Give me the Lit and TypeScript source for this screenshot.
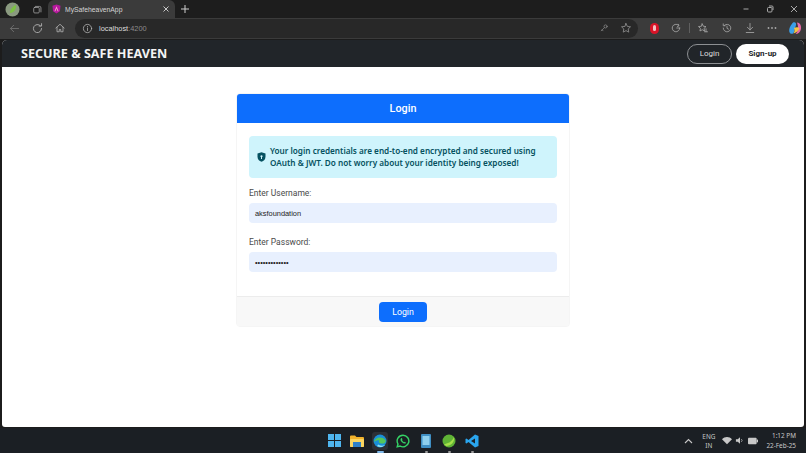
import { LitElement, html, css, svg } from "lit";
import { customElement } from "lit/decorators.js";

const ic = (body: unknown, size = 14, vb = 16) =>
  html`<svg width=${size} height=${size} viewBox="0 0 ${vb} ${vb}" fill="none" stroke="currentColor" stroke-width="1.1" stroke-linecap="round" stroke-linejoin="round">${body}</svg>`;

@customElement("app-root")
export class AppRoot extends LitElement {
  static styles = css`
    :host { display: block; width: 806px; height: 453px; overflow: hidden; background: #1c1c1c; font-family: Roboto, "Noto Sans", sans-serif; }
    * { box-sizing: border-box; }
    .tabs { height: 18px; background: #1d1d1d; display: flex; align-items: flex-end; color: #c8c8c8; position: relative; }
    .profile { width: 24px; height: 18px; display: flex; align-items: center; justify-content: center; align-self: flex-start; padding-top: 1px; }
    .collections { width: 24px; height: 18px; display: flex; align-items: center; justify-content: center; align-self: flex-start; padding-left: 2px; color: #aaa; }
    .tab { width: 127px; height: 18px; background: #3b3b3b; border-radius: 6px 6px 0 0; display: flex; align-items: center; padding: 0 5px 0 4px; font-family: "Liberation Sans", sans-serif; font-size: 6.8px; color: #d4d4d4; gap: 4px; }
    .tab span { flex: 1; }
    .plus { margin-left: 5px; height: 18px; display: flex; align-items: center; color: #cfcfcf; }
    .win { margin-left: auto; display: flex; align-self: flex-start; height: 18px; align-items: center; gap: 16px; padding-right: 8px; color: #a8a8a8; }
    .toolbar { height: 21px; background: #3b3b3b; display: flex; align-items: center; color: #a8a8a8; padding: 0 4px 1px 8px; }
    .nav { display: flex; gap: 10px; align-items: center; color: #b0b0b0; }
    .nav svg:first-child { color: #707070; }
    .url { margin-left: 9px; width: 563px; height: 19px; border-radius: 10px; background: #282828; display: flex; align-items: center; padding: 0 6px 0 7px; font-family: "Liberation Sans", sans-serif; font-size: 7.4px; color: #dedede; }
    .url .port { color: #8c8c8c; }
    .url .i { margin-right: 6px; display: flex; color: #b8b8b8; }
    .url .end { margin-left: auto; display: flex; gap: 11px; align-items: center; color: #8f8f8f; }
    .tools { margin-left: 9px; display: flex; flex: 1; align-items: center; justify-content: space-between; padding-left: 3px; }
    .sep { width: 1px; height: 10px; background: #5f5f5f; margin: 0 -4px; }
    .red { width: 9px; height: 11px; border-radius: 5px; background: #d91428; display: flex; align-items: center; justify-content: center; }
    .red i { width: 3px; height: 6px; border-radius: 2px; background: #f3c0c4; }
    .page { margin: 1px 2px 0; height: 387px; border-radius: 5px 5px 3px 3px; overflow: hidden; background: #fff; }
    .appbar { height: 27px; background: #212529; display: flex; align-items: center; padding: 0 15px 0 19px; }
    .brand { font-family: "Noto Sans", sans-serif; font-size: 12.6px; font-weight: 700; color: #f4f4f4; }
    .btns { margin-left: auto; display: flex; gap: 4px; }
    .btn { height: 20px; border-radius: 10px; display: flex; align-items: center; justify-content: center; }
    .outline { width: 45px; border: 1px solid #8d9093; color: #dcdcdc; font-size: 8px; }
    .solid { width: 53px; background: #fff; color: #212529; font-size: 8px; font-weight: 700; }
    .content { display: flex; justify-content: center; padding-top: 26px; }
    .card { width: 334px; height: 234px; border: 1px solid #f5f5f5; border-radius: 4px; display: flex; flex-direction: column; overflow: hidden; }
    .head { height: 30px; margin: -1px -1px 0; background: #0d6efd; color: #fff; font-size: 10.8px; font-weight: 500; display: flex; align-items: center; justify-content: center; border-radius: 4px 4px 0 0; }
    .body { flex: 1; padding: 13px 12px 0; }
    .alert { height: 42px; background: #cff4fc; border-radius: 4px; color: #055160; font-family: "Noto Sans", sans-serif; font-size: 8.2px; font-weight: 600; line-height: 12.5px; display: flex; align-items: center; gap: 4px; padding: 0 8px; }
    .alert svg { flex: none; }
    .label { font-size: 8.5px; color: #4a4a4a; line-height: 12px; margin-top: 9px; margin-bottom: 4px; }
    .label.second { margin-top: 13px; }
    .input { height: 20px; background: #e8f0fe; border-radius: 4px; font-family: "Liberation Sans", sans-serif; font-size: 7.4px; color: #222; display: flex; align-items: center; padding-left: 6px; }
    .foot { height: 30px; background: #f8f8f8; border-top: 1px solid #ececec; display: flex; align-items: center; justify-content: center; }
    .submit { width: 48px; height: 20px; border-radius: 4px; background: #0d6efd; color: #fff; font-size: 8.8px; display: flex; align-items: center; justify-content: center; }
    .taskbar { height: 25px; margin-top: 1px; background: #1b1f24; position: relative; display: flex; align-items: center; justify-content: center; gap: 7px; }
    .app { width: 16px; height: 18px; display: flex; align-items: center; justify-content: center; position: relative; }
    .app.active { background: #2c3036; border-radius: 3px; }
    .app.dot::after { content: ""; position: absolute; bottom: -3px; width: 3px; height: 2px; background: #9a9a9a; border-radius: 1px; }
    .app.active::after { content: ""; position: absolute; bottom: -3px; width: 7px; height: 2px; background: #7db7e8; border-radius: 1px; }
    .tray { position: absolute; right: 10px; top: 0; height: 25px; display: flex; align-items: center; color: #c8c8c8; font-family: "Noto Sans", sans-serif; font-size: 6.4px; }
    .lang { text-align: center; line-height: 9px; margin: 0 7px 0 9px; }
    .clock { text-align: right; line-height: 10px; margin-left: 8px; }
    .icons { display: flex; gap: 3px; align-items: center; }
  `;

  render() {
    return html`
      <div class="tabs">
        <div class="profile">
          <svg width="15" height="15" viewBox="0 0 15 15"><circle cx="7.5" cy="7.5" r="7" fill="#8a9a7f"/><path d="M5 11 C5 7 8 4 11 3 C11.500 7 9 11 5 11Z" fill="#7bc043"/></svg>
        </div>
        <div class="collections">
          ${ic(svg`<rect x="2.5" y="5" width="8" height="8" rx="1.5"/><path d="M5 3.5h6a2 2 0 0 1 2 2v6"/>`, 11)}
        </div>
        <div class="tab">
          <svg width="9" height="10" viewBox="0 0 10 11"><path d="M5 0.5 L9.5 2 L8.8 8 L5 10.5 L1.2 8 L0.5 2Z" fill="#b5179e"/><path d="M5 2.5 L7.3 8 H6.2 L5 5 L3.8 8 H2.7Z" fill="#f3a6c8"/></svg>
          <span>MySafeheavenApp</span>
          <svg width="8" height="8" viewBox="0 0 8 8" stroke="#c9c9c9" stroke-width="1"><path d="M1.5 1.5l5 5M6.5 1.5l-5 5"/></svg>
        </div>
        <div class="plus">
          <svg width="10" height="10" viewBox="0 0 10 10" stroke="currentColor" stroke-width="1"><path d="M5 1v8M1 5h8"/></svg>
        </div>
        <div class="win">
          <svg width="8" height="8" viewBox="0 0 8 8" stroke="currentColor"><path d="M1.5 4h5"/></svg>
          <svg width="8" height="8" viewBox="0 0 8 8" fill="none" stroke="currentColor"><rect x="1.5" y="2.5" width="4.5" height="4.5" rx="1"/><path d="M3 1h3a1 1 0 0 1 1 1v3"/></svg>
          <svg width="8" height="8" viewBox="0 0 8 8" stroke="currentColor"><path d="M1 1l6 6M7 1l-6 6"/></svg>
        </div>
      </div>
      <div class="toolbar">
        <div class="nav">
          ${ic(svg`<path d="M13 8H3M7 4L3 8l4 4"/>`, 13)}
          ${ic(svg`<path d="M13 8a5 5 0 1 1-1.500-3.500M13 2v3h-3"/>`, 13)}
          ${ic(svg`<path d="M2.500 8L8 3l5.500 5M4 7v6h3v-3h2v3h3V7"/>`, 12)}
        </div>
        <div class="url">
          <span class="i">${ic(svg`<circle cx="8" cy="8" r="6"/><path d="M8 7.500v3.500M8 5v.5"/>`, 11)}</span>
          <span>localhost<span class="port">:4200</span></span>
          <div class="end">
            ${ic(svg`<circle cx="10.500" cy="5.500" r="2.500"/><path d="M8.500 7.500L3.500 12.500M5 11l1.500 1.500"/>`, 10)}
            ${ic(svg`<path d="M8 2l1.800 3.900 4.200.5-3.100 2.900.8 4.200L8 11.500l-3.700 2 .8-4.200L2 6.400l4.200-.5z"/>`, 12)}
          </div>
        </div>
        <div class="tools">
          <span class="red"><i></i></span>
          ${ic(svg`<path d="M13 8a5 5 0 1 1-2-4M11 3l1 2-2 1M9 8h4"/>`, 12)}
          <span class="sep"></span>
          ${ic(svg`<path d="M7 2.500l1.500 3.200 3.500.4-2.600 2.400.7 3.500L7 10.300l-3.100 1.700.7-3.500L2 6.100l3.500-.4zM12 9v4M10 13h4"/>`, 12)}
          ${ic(svg`<path d="M3 8a5 5 0 1 0 1.500-3.500M3 2.500V5h2.500M8 5.500V8.500l2 1"/>`, 12)}
          ${ic(svg`<path d="M8 2v8.500M4.500 7L8 10.500 11.500 7M3 14h10"/>`, 12)}
          <svg width="10" height="4" viewBox="0 0 10 4" fill="currentColor"><circle cx="1.500" cy="2" r="0.900"/><circle cx="5" cy="2" r="0.900"/><circle cx="8.500" cy="2" r="0.900"/></svg>
          <svg width="14" height="14" viewBox="0 0 14 14"><path d="M5 1.500C7 .5 8.500 2 8 4L6 11c-.5 2-3 2.500-4 1-1.500-2-1-6 3-10.500z" fill="#3aa0e8"/><path d="M9 1.500c3 0 4.500 3 4 6.500-.5 3-3 5-5.500 5 1.500-1 2.500-4 2.500-6.500C10 4.500 9.500 3 9 1.500z" fill="#e96aa8"/><path d="M6 7c2-1 4.500-1 5.500.5C10 10 8 12 5.500 12.500 6.500 11 7 9 6 7z" fill="#f6c344"/></svg>
        </div>
      </div>
      <div class="page">
        <div class="appbar">
          <div class="brand">SECURE &amp; SAFE HEAVEN</div>
          <div class="btns">
            <div class="btn outline">Login</div>
            <div class="btn solid">Sign-up</div>
          </div>
        </div>
        <div class="content">
          <div class="card">
            <div class="head">Login</div>
            <div class="body">
              <div class="alert">
                <svg width="9" height="10" viewBox="0 0 9 10"><path d="M4.500 0.300L8.500 1.600V4.800C8.500 7.300 6.800 9 4.500 9.800 2.200 9 .5 7.300 .5 4.800V1.600Z" fill="#055160"/><circle cx="4.500" cy="4.300" r="1.100" fill="#cff4fc"/><rect x="4" y="4.800" width="1" height="2.200" fill="#cff4fc"/></svg>
                <div>Your login credentials are end-to-end encrypted and secured using OAuth &amp; JWT. Do not worry about your identity being exposed!</div>
              </div>
              <div class="label">Enter Username:</div>
              <div class="input">aksfoundation</div>
              <div class="label second">Enter Password:</div>
              <div class="input">•••••••••••••</div>
            </div>
            <div class="foot"><div class="submit">Login</div></div>
          </div>
        </div>
      </div>
      <div class="taskbar">
        <div class="app">
          <svg width="13" height="13" viewBox="0 0 13 13" fill="#4fb6ef"><rect width="6" height="6"/><rect x="7" width="6" height="6"/><rect y="7" width="6" height="6"/><rect x="7" y="7" width="6" height="6"/></svg>
        </div>
        <div class="app">
          <svg width="14" height="12" viewBox="0 0 14 12"><path d="M0 1.500A1 1 0 0 1 1 .5H5L6.500 2H13A1 1 0 0 1 14 3V11A1 1 0 0 1 13 12H1A1 1 0 0 1 0 11Z" fill="#f2b32c"/><rect y="4" width="14" height="8" rx="1" fill="#fbd661"/><rect x="3" y="7" width="8" height="5" fill="#2f80c8"/></svg>
        </div>
        <div class="app active">
          <svg width="14" height="14" viewBox="0 0 14 14"><circle cx="7" cy="7" r="6.500" fill="#1a8fd8"/><path d="M1 8C2 3 9 2 12.500 6 13.500 9 10 10 8 9.500 6 9 5 7.500 6.500 6.500 4 5.500 2 7 1 8Z" fill="#54c65a"/><path d="M4 12c2 1.500 6 1.500 8-1-2 1-5 1-6.500-.5z" fill="#8fe3f5"/></svg>
        </div>
        <div class="app">
          <svg width="14" height="14" viewBox="0 0 14 14"><path d="M7 1.200A5.800 5.800 0 0 0 2 10L1.200 12.800 4.100 12A5.800 5.800 0 1 0 7 1.200Z" fill="none" stroke="#35d366" stroke-width="1.400"/><path d="M5 4.300C4 5.500 4.500 7 6 8.300 7.500 9.700 9 10 10 9L9 7.800 8 8.300C7 7.800 6.300 7 6 6L6.500 5.200 5.800 4Z" fill="#35d366"/></svg>
        </div>
        <div class="app dot">
          <svg width="10" height="14" viewBox="0 0 10 14"><rect width="10" height="14" rx="1" fill="#3f8fc4"/><rect x="1.500" y="2" width="7" height="9" fill="#8fd0ee"/></svg>
        </div>
        <div class="app dot">
          <svg width="14" height="14" viewBox="0 0 14 14"><circle cx="7" cy="7" r="6.500" fill="#5fb336"/><path d="M2 10C5 10 10 8 12 3 13 8 9 12 4 12Z" fill="#a6e04a"/></svg>
        </div>
        <div class="app dot">
          <svg width="14" height="14" viewBox="0 0 14 14"><path d="M10 .5L13.500 2V12L10 13.500 3.500 8 1.500 9.500 .5 9V5L1.500 4.500 3.500 6ZM10 4.500L6 7L10 9.500Z" fill="#2aa5ee" fill-rule="evenodd"/></svg>
        </div>
        <div class="tray">
          <svg width="9" height="6" viewBox="0 0 9 6" fill="none" stroke="currentColor" stroke-width="1.100"><path d="M1 5l3.500-3.500L8 5"/></svg>
          <div class="lang">ENG<br />IN</div>
          <div class="icons">
            <svg width="10" height="9" viewBox="0 0 11 9" fill="currentColor"><path d="M5.500 8.500L0 3C3 0 8 0 11 3Z"/></svg>
            <svg width="10" height="9" viewBox="0 0 11 9" fill="currentColor"><path d="M1 3H3L5.500 1V8L3 6H1Z"/><path d="M7 3a2 2 0 0 1 0 3" fill="none" stroke="currentColor" stroke-width=".8"/></svg>
            <svg width="10" height="9" viewBox="0 0 11 9" fill="currentColor"><rect y="1.500" width="9.500" height="7" rx="1"/><rect x="9.500" y="3.500" width="1.500" height="3"/></svg>
          </div>
          <div class="clock">1:12 PM<br />22-Feb-25</div>
        </div>
      </div>
    `;
  }
}
